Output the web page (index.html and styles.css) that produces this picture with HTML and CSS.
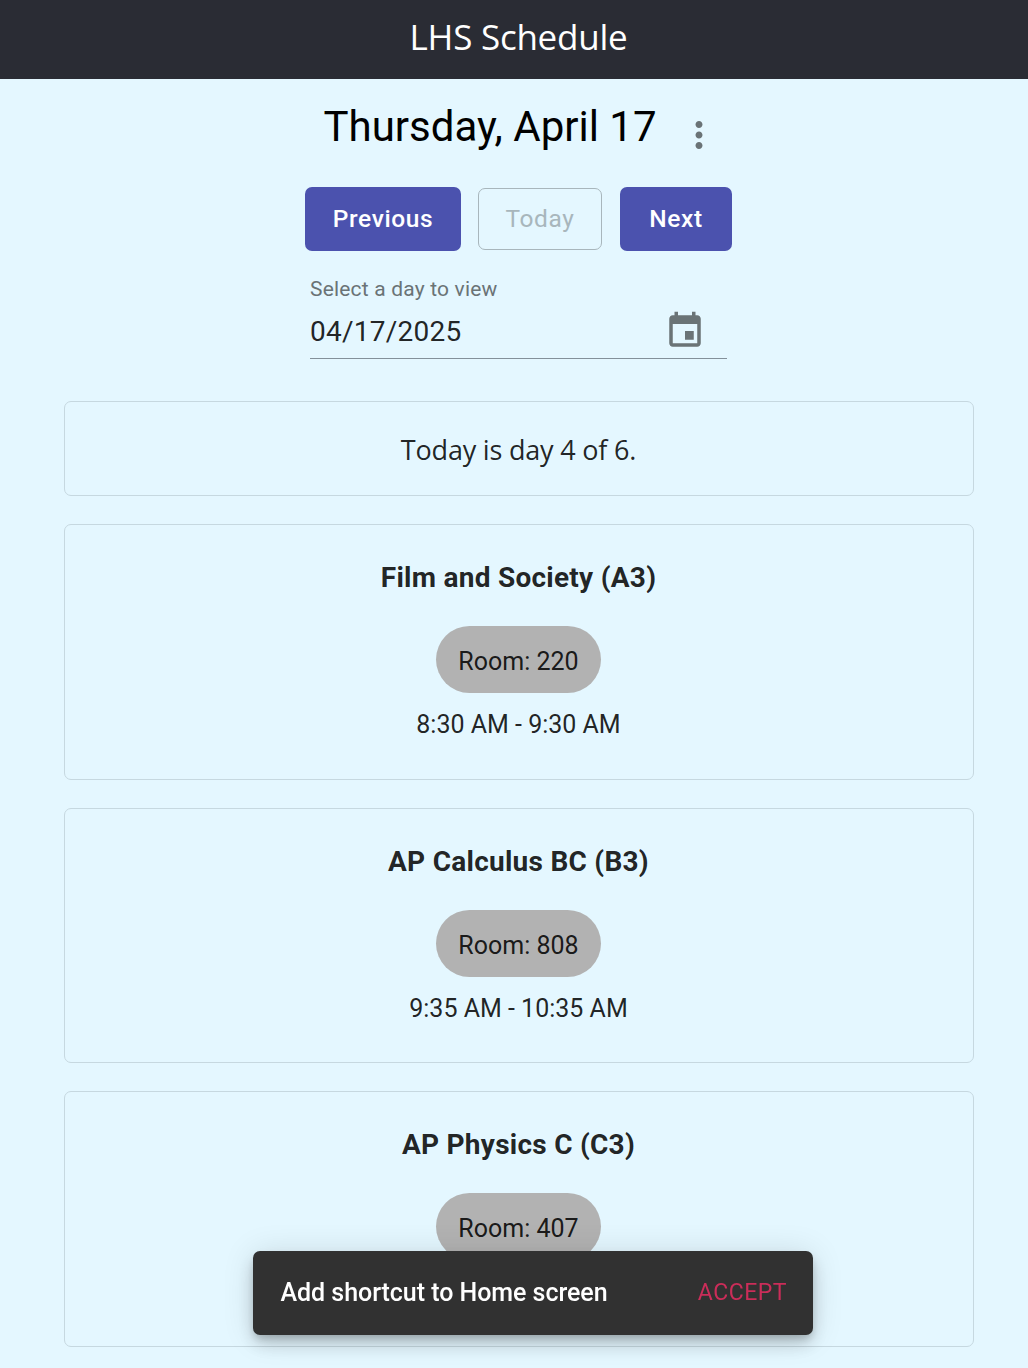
FILE: index.html
```html
<!DOCTYPE html>
<html lang="en">
<head>
<meta charset="utf-8">
<title>LHS Schedule</title>
<link rel="stylesheet" href="styles.css">
</head>
<body>
<header class="app-bar"><h1>LHS Schedule</h1></header>
<main>
  <div class="date-row">
    <h2>Thursday, April 17</h2>
    <button class="icon-button" aria-label="More options">
      <svg class="more-icon" viewBox="0 0 24 24"><path d="M12 8c1.1 0 2-.9 2-2s-.9-2-2-2-2 .9-2 2 .9 2 2 2zm0 2c-1.1 0-2 .9-2 2s.9 2 2 2 2-.9 2-2-.9-2-2-2zm0 6c-1.1 0-2 .9-2 2s.9 2 2 2 2-.9 2-2-.9-2-2-2z"/></svg>
    </button>
  </div>
  <div class="day-nav">
    <button class="button previous">Previous</button>
    <button class="button today" disabled>Today</button>
    <button class="button next">Next</button>
  </div>
  <div class="date-field">
    <span class="field-label">Select a day to view</span>
    <div class="field-input">
      <span class="field-value">04/17/2025</span>
      <svg class="calendar-icon" viewBox="0 0 24 24"><path d="M17 12h-5v5h5v-5zM16 1v2H8V1H6v2H5c-1.11 0-1.99.9-1.99 2L3 19c0 1.1.89 2 2 2h14c1.1 0 2-.9 2-2V5c0-1.1-.9-2-2-2h-1V1h-2zm3 18H5V8h14v11z"/></svg>
    </div>
  </div>
  <section class="cards">
    <div class="card day-card"><p class="day-text">Today is day 4 of 6.</p></div>
    <article class="card class-card">
      <h3>Film and Society (A3)</h3>
      <span class="chip">Room: 220</span>
      <p class="time">8:30 AM - 9:30 AM</p>
    </article>
    <article class="card class-card">
      <h3>AP Calculus BC (B3)</h3>
      <span class="chip">Room: 808</span>
      <p class="time">9:35 AM - 10:35 AM</p>
    </article>
    <article class="card class-card">
      <h3>AP Physics C (C3)</h3>
      <span class="chip">Room: 407</span>
    </article>
  </section>
</main>
<div class="snackbar">
  <span class="snackbar-text">Add shortcut to Home screen</span>
  <button class="accept">ACCEPT</button>
</div>
</body>
</html>
```
FILE: styles.css
```css
* { box-sizing: border-box; }
html, body { height: 100%; }
body {
  margin: 0;
  overflow: hidden;
  background: #e4f7ff;
  color: rgba(0, 0, 0, 0.87);
  font-family: Roboto, sans-serif;
}
h1, h2, h3, p { margin: 0; }
button {
  border: 0;
  background: none;
  padding: 0;
  font-family: inherit;
}
.app-bar {
  height: 79px;
  padding: 12px 0 0 9px;
  background: #2a2c34;
  color: #fff;
  text-align: center;
}
.app-bar h1 {
  font: 400 35px/50px "Open Sans", sans-serif;
  letter-spacing: -0.25px;
}
main {
  display: flex;
  flex-direction: column;
  align-items: center;
  padding-left: 9px;
}
.date-row {
  display: flex;
  height: 108px;
  padding: 23px 0 0 6px;
}
.date-row h2 {
  color: #000;
  font-size: 42px;
  font-weight: 400;
  line-height: 49px;
}
.icon-button {
  width: 42px;
  height: 42px;
  margin: 12px 0 0 21px;
}
.more-icon {
  display: block;
  width: 42px;
  height: 42px;
  fill: #6a7376;
}
.day-nav {
  display: flex;
  align-items: center;
  height: 64px;
}
.button {
  height: 64px;
  padding-bottom: 2px;
  border-radius: 7px;
  background: #4b52ae;
  color: #fff;
  font-size: 24.5px;
  font-weight: 500;
  letter-spacing: 0.6px;
}
.previous { width: 156px; }
.today {
  width: 124px;
  height: 62px;
  margin: 0 18px 0 17px;
  border: 1px solid #a8b6bc;
  background: none;
  color: #a8b6bc;
  font-weight: 400;
}
.next { width: 112px; }
.date-field {
  width: 417px;
  height: 83px;
  margin-top: 25px;
  border-bottom: 1px solid #83909a;
}
.field-label {
  display: block;
  color: #6a7376;
  font-size: 21px;
  line-height: 26px;
  letter-spacing: 0.18px;
}
.field-input {
  display: flex;
  align-items: flex-start;
  justify-content: space-between;
  padding: 8px 21px 0 0;
}
.field-value {
  padding-top: 5px;
  font-size: 28px;
  line-height: 34px;
  letter-spacing: 0.26px;
}
.calendar-icon {
  width: 42px;
  height: 42px;
  fill: #6a7376;
}
.cards {
  display: flex;
  flex-direction: column;
  gap: 28px;
  width: 910px;
  margin-top: 42px;
}
.card {
  display: flex;
  flex-direction: column;
  align-items: center;
  flex-shrink: 0;
  border: 1px solid #c6d8e0;
  border-radius: 7px;
}
.day-card {
  height: 95px;
  padding-top: 28px;
}
.day-text {
  font: 400 27px/40px "Open Sans", sans-serif;
  letter-spacing: -0.2px;
}
.class-card {
  height: 255.5px;
  padding-top: 36px;
}
.class-card h3 {
  font-size: 28px;
  font-weight: 700;
  line-height: 34px;
  letter-spacing: 0.26px;
}
.chip {
  width: 165px;
  height: 67px;
  margin-top: 31px;
  padding-top: 2px;
  border-radius: 34px;
  background: #b2b2b2;
  font-size: 25px;
  line-height: 67px;
  text-align: center;
}
.time {
  margin-top: 15px;
  font-size: 25px;
  line-height: 34px;
}
.snackbar {
  position: fixed;
  left: 253px;
  bottom: 33px;
  display: flex;
  align-items: center;
  justify-content: space-between;
  width: 560px;
  height: 84px;
  padding: 0 26px 1px 27.5px;
  border-radius: 7px;
  background: #313131;
  color: #fff;
  box-shadow: 0 5px 9px -2px rgba(0, 0, 0, 0.2), 0 10px 18px rgba(0, 0, 0, 0.14), 0 2px 32px rgba(0, 0, 0, 0.12);
}
.snackbar-text {
  font-size: 25px;
  font-weight: 500;
  letter-spacing: -0.04px;
}
.accept {
  color: #cb2d59;
  font-size: 23px;
  letter-spacing: 0.5px;
}
```
